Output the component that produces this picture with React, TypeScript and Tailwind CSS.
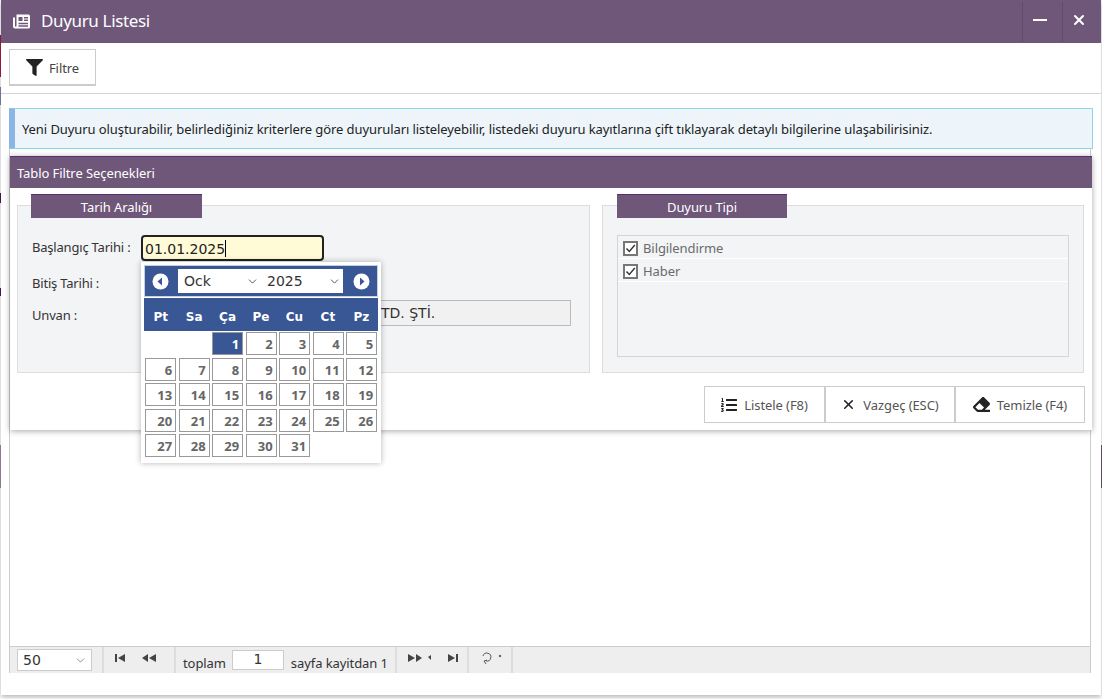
import { FaFilter, FaListOl, FaEraser } from "react-icons/fa";
import { ChevronDown, X } from "lucide-react";

const days = [1,2,3,4,5,6,7,8,9,10,11,12,13,14,15,16,17,18,19,20,21,22,23,24,25,26,27,28,29,30,31];
const weekDays = ["Pt","Sa","Ça","Pe","Cu","Ct","Pz"];
const mono = "font-['DejaVu_Sans',sans-serif] tracking-normal";

const Legend = ({ label, className }: { label: string; className: string }) => (
  <div className={`absolute top-[-12px] h-[24px] bg-[#6e5779] border-t border-[#5a2d72] text-white text-[13px] leading-[24px] text-center tracking-[-0.085px] ${className}`}>
    {label}
  </div>
);

const Check = ({ label }: { label: string }) => (
  <div className="h-[23px] flex items-center border-b border-white pl-[5px] pt-[3px] gap-[5px] text-[13px] text-[#6b6b6b]">
    <span className="w-[15px] h-[15px] border-2 border-[#777] bg-white flex items-center justify-center">
      <svg width="11" height="11" viewBox="0 0 11 11" fill="none" stroke="#333" strokeWidth="1.4">
        <path d="M1.5 5.5l2.8 3L9.8 2" />
      </svg>
    </span>
    {label}
  </div>
);

const ActionButton = ({ icon, label, w }: { icon: React.ReactNode; label: string; w: string }) => (
  <button className={`h-[37px] ${w} border border-[#ccc] bg-white flex items-center justify-center gap-[7px] text-[13px] text-[#555]`}>
    {icon}
    <span className="pt-[2px]">{label}</span>
  </button>
);

const Calendar = () => (
  <div className="absolute left-[141px] top-[262px] w-[240px] h-[201px] bg-white shadow-[0_0_6px_rgba(0,0,0,0.3)] p-[3px]">
    <div className="h-[32px] bg-[#3a5795] border border-[#c5cfe0] flex items-center justify-between px-[7px]">
      <svg width="17" height="17" viewBox="0 0 17 17">
        <circle cx="8.5" cy="8.5" r="8" fill="#fff" />
        <path d="M10 4.5v8l-4.5-4z" fill="#3a5795" />
      </svg>
      <div className={`mr-[1px] w-[165px] h-[24px] bg-white flex items-center text-[14px] text-[#333] ${mono}`}>
        <span className="w-[68px] pl-[6px] pt-[1px]">Ock</span>
        <ChevronDown size={13} className="text-[#555]" strokeWidth={1.8} />
        <span className="ml-[2px] w-[67px] pl-[6px] pt-[1px]">2025</span>
        <ChevronDown size={13} className="text-[#555]" strokeWidth={1.8} />
      </div>
      <svg width="17" height="17" viewBox="0 0 17 17">
        <circle cx="8.5" cy="8.5" r="8" fill="#fff" />
        <path d="M7 4.5v8l4.5-4z" fill="#3a5795" />
      </svg>
    </div>
    <div className={`mt-[1px] h-[33px] pt-[4px] bg-[#3a5795] grid grid-cols-7 items-center text-center text-white text-[12px] font-bold ${mono}`}>
      {weekDays.map((d) => (
        <span key={d}>{d}</span>
      ))}
    </div>
    <div className="mt-[1px] ml-[1px] grid grid-cols-[repeat(7,31px)] gap-x-[2.5px] gap-y-[2.5px]">
      <span />
      <span />
      {days.map((d) => (
        <span
          key={d}
          className={`h-[23px] border border-[#999] text-right pr-[3px] text-[13px] leading-[23px] font-bold ${d === 1 ? "bg-[#3a5795] text-white" : "bg-white text-[#666]"}`}
        >
          {d}
        </span>
      ))}
    </div>
  </div>
);

const FilterPanel = () => (
  <div className="absolute left-[10px] top-[156px] w-[1082px] h-[274px] bg-white shadow-[0_1px_6px_rgba(0,0,0,0.35)]">
    <div className="h-[32px] bg-[#6e5779] border-t border-[#5a2d72] text-white text-[13px] leading-[32px] pl-[7px]">
      Tablo Filtre Seçenekleri
    </div>
    <div className="flex gap-[12px] pl-[7px] mt-[17px]">
      <div className="relative w-[573px] h-[168px] bg-[#f3f4f6] border border-[#ddd] text-[13px] text-[#333] tracking-[-0.2px]">
        <Legend label="Tarih Aralığı" className="left-[13px] w-[171px]" />
        <div className="pt-[29px] pl-[14px]">
          <div className="flex items-center h-[26px]">
            <span className="w-[109px]">Başlangıç Tarihi :</span>
            <div className={`w-[183px] h-[26px] bg-[#fffbd6] border-2 border-[#222] rounded-[4px] pl-[2px] leading-[24px] text-[14px] text-[#222] ${mono}`}>
              01.01.2025<span className="inline-block w-px h-[17px] bg-black align-[-3px]" />
            </div>
          </div>
          <div className="mt-[10px] h-[26px] leading-[24px]">Bitiş Tarihi :</div>
          <div className="mt-[3px] flex items-center h-[26px]">
            <span className="w-[109px] pt-[5px]">Unvan :</span>
            <div className={`w-[430px] h-[26px] bg-[#f1f1f1] border border-[#bbb] pl-[239px] leading-[24px] text-[14px] whitespace-nowrap ${mono}`}>
              TD. ŞTİ.
            </div>
          </div>
        </div>
      </div>
      <div className="relative w-[482px] h-[168px] bg-[#f3f4f6] border border-[#ddd]">
        <Legend label="Duyuru Tipi" className="left-[14px] w-[170px]" />
        <div className="mt-[29px] ml-[14px] w-[452px] h-[122px] border border-[#d5d5d5]">
          <Check label="Bilgilendirme" />
          <Check label="Haber" />
        </div>
      </div>
    </div>
    <div className="flex justify-end pr-[7px] mt-[13px]">
      <ActionButton w="w-[121px]" label="Listele (F8)" icon={<FaListOl className="text-[16px] text-[#222]" />} />
      <ActionButton w="w-[130px]" label="Vazgeç (ESC)" icon={<X size={15} strokeWidth={2.5} className="text-[#222]" />} />
      <ActionButton w="w-[130px]" label="Temizle (F4)" icon={<FaEraser className="text-[17px] text-[#222]" />} />
    </div>
  </div>
);

const PagerCell = ({ w, children }: { w: string; children?: React.ReactNode }) => (
  <div className={`h-full border-r-2 border-[#ddd] flex items-center ${w}`}>{children}</div>
);

const Pager = () => (
  <div className="mt-auto h-[27px] bg-[#eee] border-t border-[#ccc] flex items-stretch text-[13px] text-[#333] pl-[7px] shrink-0">
    <PagerCell w="w-[87px]">
      <div className={`w-[75px] h-[22px] bg-white border border-[#ccc] flex items-center justify-between pl-[5px] pr-[4px] text-[14px] ${mono}`}>
        50
        <ChevronDown size={13} className="text-[#777]" strokeWidth={1.5} />
      </div>
    </PagerCell>
    <PagerCell w="w-[72px]">
      <svg width="46" height="10" viewBox="0 0 46 10" className="ml-[10px] mb-[4px] text-[#444]">
        <path d="M1 1h2v8H1zM4 5l7-4v8zM28 5l6-4v8zM35 5l7-4v8z" fill="currentColor" />
      </svg>
    </PagerCell>
    <PagerCell w="w-[221px]">
      <span className="ml-[7px] mt-[7px]">toplam</span>
      <span className={`ml-[6px] w-[52px] h-[20px] mb-[1px] bg-white border border-[#ccc] text-center leading-[16px] text-[14px] ${mono}`}>
        1
      </span>
      <span className="ml-[7px] mt-[7px] whitespace-nowrap">sayfa kayitdan 1</span>
    </PagerCell>
    <PagerCell w="w-[72px]">
      <svg width="58" height="10" viewBox="0 0 58 10" className="ml-[10px] mb-[4px] text-[#444]">
        <path d="M1 1l7 4-7 4zM9 1l6 4-6 4zM21 4l3-2v5zM41 1l7 4-7 4zM49 1h2v8h-2z" fill="currentColor" />
      </svg>
    </PagerCell>
    <PagerCell w="w-[44px]">
      <svg width="24" height="14" viewBox="0 0 24 14" className="ml-[12px] mb-[4px] text-[#555]" fill="none" stroke="currentColor">
        <path d="M2 5a4 4 0 1 1 3 5M5 13l-2-3 3-1" />
        <circle cx="19" cy="5" r="0.8" fill="currentColor" />
      </svg>
    </PagerCell>
  </div>
);

const App = () => {
  return (
    <div className="relative w-[1102px] h-[699px] bg-white overflow-hidden font-['Noto_Sans',sans-serif] tracking-[-0.085px]">
      {/* bits of the page behind the window */}
      <div className="absolute left-0 top-[35px] w-px h-[42px] bg-[#a0203c]" />
      <div className="absolute left-0 top-[87px] w-px h-[18px] bg-[#7f86ad]" />
      <div className="absolute left-0 top-[193px] w-px h-[10px] bg-[#4b1a5e]" />
      <div className="absolute left-0 top-[288px] w-px h-[8px] bg-[#4b1a5e]" />
      <div className="absolute left-0 top-[445px] w-px h-[43px] bg-[#a58aa8]" />
      <div className="absolute right-0 top-[445px] w-px h-[43px] bg-[#6e5779]" />
      <div className="relative ml-px w-[1100px] h-[695px] bg-white shadow-[0_2px_5px_rgba(0,0,0,0.3)] flex flex-col">
        <div className="h-[43px] bg-[#6e5779] flex items-center text-white shrink-0">
          <svg width="17" height="15" viewBox="0 0 17 15" className="ml-[12px]" fill="#fff">
            <path d="M3.5 0.5h12a1.5 1.5 0 0 1 1.5 1.5v11a1.5 1.5 0 0 1-1.5 1.5H2a2 2 0 0 1-2-2V3.5h2V12a.75.75 0 0 0 1.5 0zM5.5 3v4h4V3zM11 3v1.4h4V3zM11 5.6V7h4V5.6zM5.5 8.8v1.4H15V8.8zM5.5 11.3v1.4H15v-1.4z" fillRule="evenodd" />
          </svg>
          <span className="ml-[11px] pb-[2px] text-[17px] tracking-[-0.35px]">Duyuru Listesi</span>
          <div className="ml-auto h-[40px] w-[40px] border-l border-[#64486f] pr-[6px] pb-[3px] flex items-center justify-center">
            <span className="w-[14px] h-[2px] bg-white" />
          </div>
          <div className="h-[40px] w-[39px] border-l border-[#64486f] pr-[6px] pb-[3px] flex items-center justify-center">
            <X size={16} strokeWidth={3} />
          </div>
        </div>
        <div className="h-[51px] border-b border-[#d5d5d5] flex items-start pl-[8px] pt-[6px] shrink-0">
          <button className="w-[87px] h-[37px] border border-[#ccc] border-b-2 bg-white flex items-center justify-center gap-[6px] text-[13px] text-[#444]">
            <FaFilter className="text-[17px] text-[#222]" />
            <span className="pt-[3px]">Filtre</span>
          </button>
        </div>
        <div className="mt-[14px] ml-[8px] w-[1084px] h-[41px] bg-[#edf5fa] border border-[#8fd5e6] border-l-[6px] border-l-[#8ab6e6] pl-[7px] leading-[41px] text-[13px] text-[#222] whitespace-nowrap shrink-0">
          Yeni Duyuru oluşturabilir, belirlediğiniz kriterlere göre duyuruları listeleyebilir, listedeki duyuru kayıtlarına çift tıklayarak detaylı bilgilerine ulaşabilirisiniz.
        </div>
        <div className="ml-[8px] mb-[22px] w-[1082px] flex-1 flex flex-col border-x border-[#ccc]">
          <Pager />
        </div>
      </div>
      <FilterPanel />
      <Calendar />
    </div>
  );
};

export default App;
